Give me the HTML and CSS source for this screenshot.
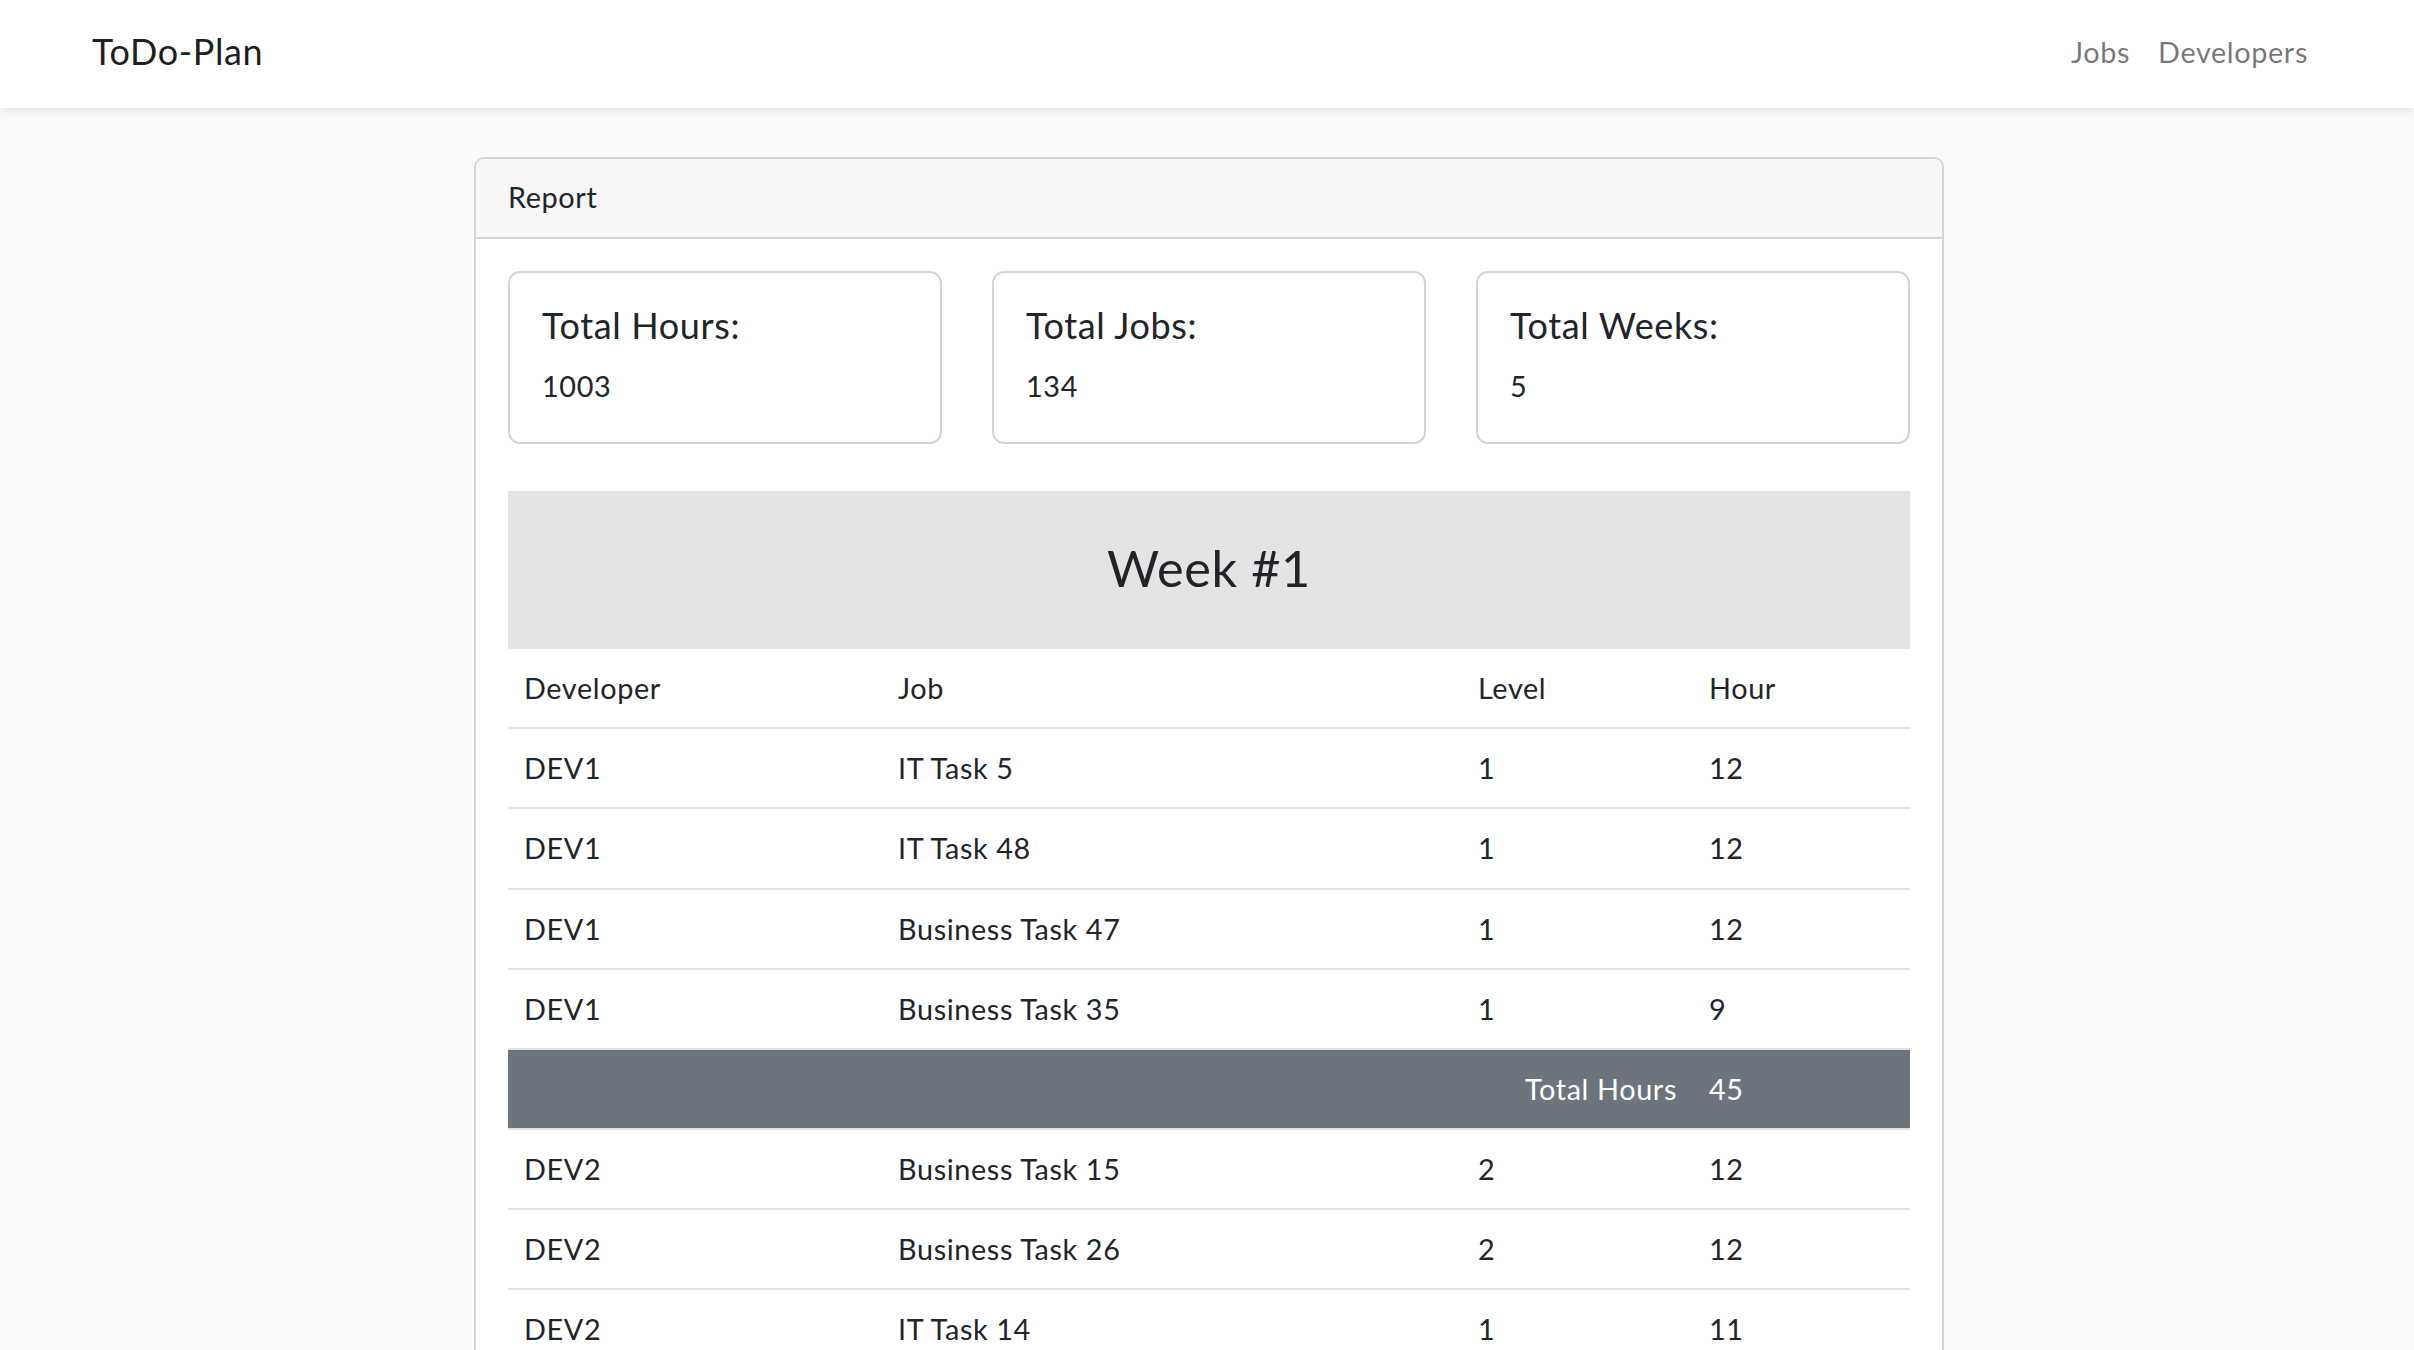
FILE: index.html
```html
<!DOCTYPE html>
<html lang="en">
<head>
<meta charset="utf-8">
<title>ToDo-Plan</title>
<link rel="stylesheet" href="styles.css">
</head>
<body>
<nav class="navbar">
  <div class="nav-inner">
    <a class="brand" href="#">ToDo-Plan</a>
    <ul class="nav-links">
      <li><a href="#">Jobs</a></li>
      <li><a href="#">Developers</a></li>
    </ul>
  </div>
</nav>
<main class="main">
  <div class="card report">
    <div class="card-header">Report</div>
    <div class="card-body">
      <div class="stats">
        <div class="stat">
          <h5 class="stat-title">Total Hours:</h5>
          <p class="stat-value">1003</p>
        </div>
        <div class="stat">
          <h5 class="stat-title">Total Jobs:</h5>
          <p class="stat-value">134</p>
        </div>
        <div class="stat">
          <h5 class="stat-title">Total Weeks:</h5>
          <p class="stat-value">5</p>
        </div>
      </div>
      <div class="week">
        <h3 class="week-title">Week #1</h3>
      </div>
      <table class="report-table">
        <thead>
          <tr>
            <th class="col-dev">Developer</th>
            <th class="col-job">Job</th>
            <th class="col-level">Level</th>
            <th class="col-hour">Hour</th>
          </tr>
        </thead>
        <tbody>
          <tr><td>DEV1</td><td>IT Task 5</td><td>1</td><td>12</td></tr>
          <tr><td>DEV1</td><td>IT Task 48</td><td>1</td><td>12</td></tr>
          <tr><td>DEV1</td><td>Business Task 47</td><td>1</td><td>12</td></tr>
          <tr><td>DEV1</td><td>Business Task 35</td><td>1</td><td>9</td></tr>
          <tr class="total-row"><td colspan="3" class="total-label">Total Hours</td><td>45</td></tr>
          <tr><td>DEV2</td><td>Business Task 15</td><td>2</td><td>12</td></tr>
          <tr><td>DEV2</td><td>Business Task 26</td><td>2</td><td>12</td></tr>
          <tr><td>DEV2</td><td>IT Task 14</td><td>1</td><td>11</td></tr>
          <tr><td>DEV2</td><td>IT Task 22</td><td>1</td><td>10</td></tr>
          <tr class="total-row"><td colspan="3" class="total-label">Total Hours</td><td>45</td></tr>
        </tbody>
      </table>
    </div>
  </div>
</main>
</body>
</html>
```
FILE: styles.css
```css
html, body {
  margin: 0;
  padding: 0;
}

body {
  background: #f8fafc;
  color: #212529;
  font-family: "Lato", "Noto Sans", sans-serif;
  font-size: 28.8px;
  line-height: 1.6;
  letter-spacing: 0.022em;
}

.navbar {
  background: #ffffff;
  height: 108px;
  box-shadow: 0 4px 8px rgba(0, 0, 0, 0.075);
  position: relative;
}

.nav-inner {
  height: 100%;
  display: flex;
  align-items: center;
  justify-content: space-between;
  padding: 0 92px 0 92px;
  box-sizing: border-box;
}

.brand {
  font-size: 36px;
  color: rgba(0, 0, 0, 0.9);
  text-decoration: none;
  line-height: 1.6;
  padding-bottom: 4px;
}

.nav-links {
  list-style: none;
  margin: 0;
  padding: 0 0 4px 0;
  display: flex;
}

.nav-links a {
  display: block;
  padding: 0 14px;
  color: rgba(0, 0, 0, 0.55);
  text-decoration: none;
}

.main {
  padding: 49px 0 48px 4px;
}

.card {
  background: #ffffff;
  border: 2px solid #d4d4d4;
  border-radius: 10px;
  box-sizing: border-box;
}

.report {
  width: 1470px;
  margin: 0 auto;
  overflow: hidden;
}

.card-header {
  background: #f7f7f7;
  border-bottom: 2px solid #d4d4d4;
  padding: 15px 32px 17px;
}

.card-body {
  padding: 32px;
}

.stats {
  display: grid;
  grid-template-columns: repeat(3, 1fr);
  gap: 50px;
}

.stat {
  border: 2px solid #d4d4d4;
  border-radius: 12px;
  padding: 31px 32px 33px;
}

.stat-title {
  margin: 0 0 16px 0;
  font-size: 36px;
  font-weight: 400;
  line-height: 1.2;
}

.stat-value {
  margin: 0;
}

.week {
  margin-top: 47px;
  background: #e4e4e4;
  padding: 46px 0 50px;
  text-align: center;
}

.week-title {
  margin: 0;
  font-size: 50.4px;
  font-weight: 400;
  line-height: 62px;
}

.report-table {
  width: 100%;
  border-collapse: collapse;
  table-layout: fixed;
}

.report-table th,
.report-table td {
  box-sizing: border-box;
  padding: 16px;
  text-align: left;
  font-weight: 400;
  vertical-align: top;
}

.report-table thead th {
  border-bottom: 2px solid #dee2e6;
}

.report-table tbody td {
  border-top: 2px solid #dee2e6;
}

.col-dev { width: 374px; }
.col-job { width: 580px; }
.col-level { width: 231px; }
.col-hour { width: 217px; }

.total-row td {
  background: #6c757d;
  color: #ffffff;
}

.report-table .total-label {
  text-align: right;
}
```
